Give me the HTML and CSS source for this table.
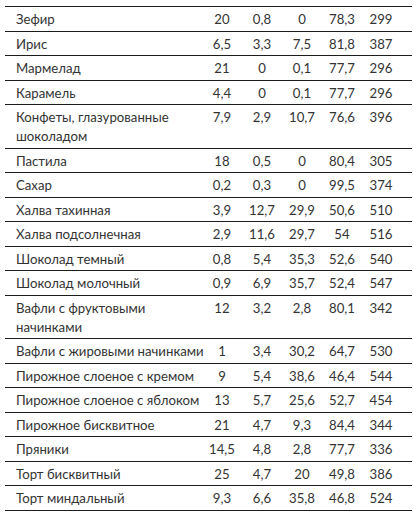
FILE: index.html
```html
<!DOCTYPE html>
<html lang="ru">
<head>
<meta charset="utf-8">
<link rel="stylesheet" href="styles.css">
</head>
<body>
<div class="page">
<table class="nutri">
<colgroup>
<col class="c-name"><col class="c-num"><col class="c-num"><col class="c-num"><col class="c-num"><col class="c-last">
</colgroup>
<tbody>
<tr><td>Зефир</td><td>20</td><td>0,8</td><td>0</td><td>78,3</td><td>299</td></tr>
<tr><td>Ирис</td><td>6,5</td><td>3,3</td><td>7,5</td><td>81,8</td><td>387</td></tr>
<tr><td>Мармелад</td><td>21</td><td>0</td><td>0,1</td><td>77,7</td><td>296</td></tr>
<tr><td>Карамель</td><td>4,4</td><td>0</td><td>0,1</td><td>77,7</td><td>296</td></tr>
<tr><td>Конфеты, глазурованные<br>шоколадом</td><td>7,9</td><td>2,9</td><td>10,7</td><td>76,6</td><td>396</td></tr>
<tr><td>Пастила</td><td>18</td><td>0,5</td><td>0</td><td>80,4</td><td>305</td></tr>
<tr><td>Сахар</td><td>0,2</td><td>0,3</td><td>0</td><td>99,5</td><td>374</td></tr>
<tr><td>Халва тахинная</td><td>3,9</td><td>12,7</td><td>29,9</td><td>50,6</td><td>510</td></tr>
<tr><td>Халва подсолнечная</td><td>2,9</td><td>11,6</td><td>29,7</td><td>54</td><td>516</td></tr>
<tr><td>Шоколад темный</td><td>0,8</td><td>5,4</td><td>35,3</td><td>52,6</td><td>540</td></tr>
<tr><td>Шоколад молочный</td><td>0,9</td><td>6,9</td><td>35,7</td><td>52,4</td><td>547</td></tr>
<tr><td>Вафли с фруктовыми<br>начинками</td><td>12</td><td>3,2</td><td>2,8</td><td>80,1</td><td>342</td></tr>
<tr><td>Вафли с жировыми начинками</td><td>1</td><td>3,4</td><td>30,2</td><td>64,7</td><td>530</td></tr>
<tr><td>Пирожное слоеное с кремом</td><td>9</td><td>5,4</td><td>38,6</td><td>46,4</td><td>544</td></tr>
<tr><td>Пирожное слоеное с яблоком</td><td>13</td><td>5,7</td><td>25,6</td><td>52,7</td><td>454</td></tr>
<tr><td>Пирожное бисквитное</td><td>21</td><td>4,7</td><td>9,3</td><td>84,4</td><td>344</td></tr>
<tr><td>Пряники</td><td>14,5</td><td>4,8</td><td>2,8</td><td>77,7</td><td>336</td></tr>
<tr><td>Торт бисквитный</td><td>25</td><td>4,7</td><td>20</td><td>49,8</td><td>386</td></tr>
<tr><td>Торт миндальный</td><td>9,3</td><td>6,6</td><td>35,8</td><td>46,8</td><td>524</td></tr>
</tbody>
</table>
</div>
</body>
</html>
```

FILE: styles.css
```css
html, body {
  margin: 0;
  padding: 0;
  background: #ffffff;
}

.page {
  padding: 6px 8px 0 5px;
}

.nutri {
  width: 407px;
  border-collapse: collapse;
  table-layout: fixed;
  font-family: "Lato", "Open Sans", sans-serif;
  font-size: 13.2px;
  line-height: 19px;
  color: #333333;
}

.c-name { width: 197px; }
.c-num { width: 40px; }
.c-last { width: 50px; }

.nutri td {
  border-top: 1px solid #1c1c1c;
  border-bottom: 1px solid #1c1c1c;
  padding: 3px 0 1.5px 0;
  vertical-align: top;
  text-align: center;
  white-space: nowrap;
}

.nutri td:first-child {
  text-align: left;
  padding-left: 11px;
}

.nutri td:last-child {
  padding-right: 12px;
}
```
